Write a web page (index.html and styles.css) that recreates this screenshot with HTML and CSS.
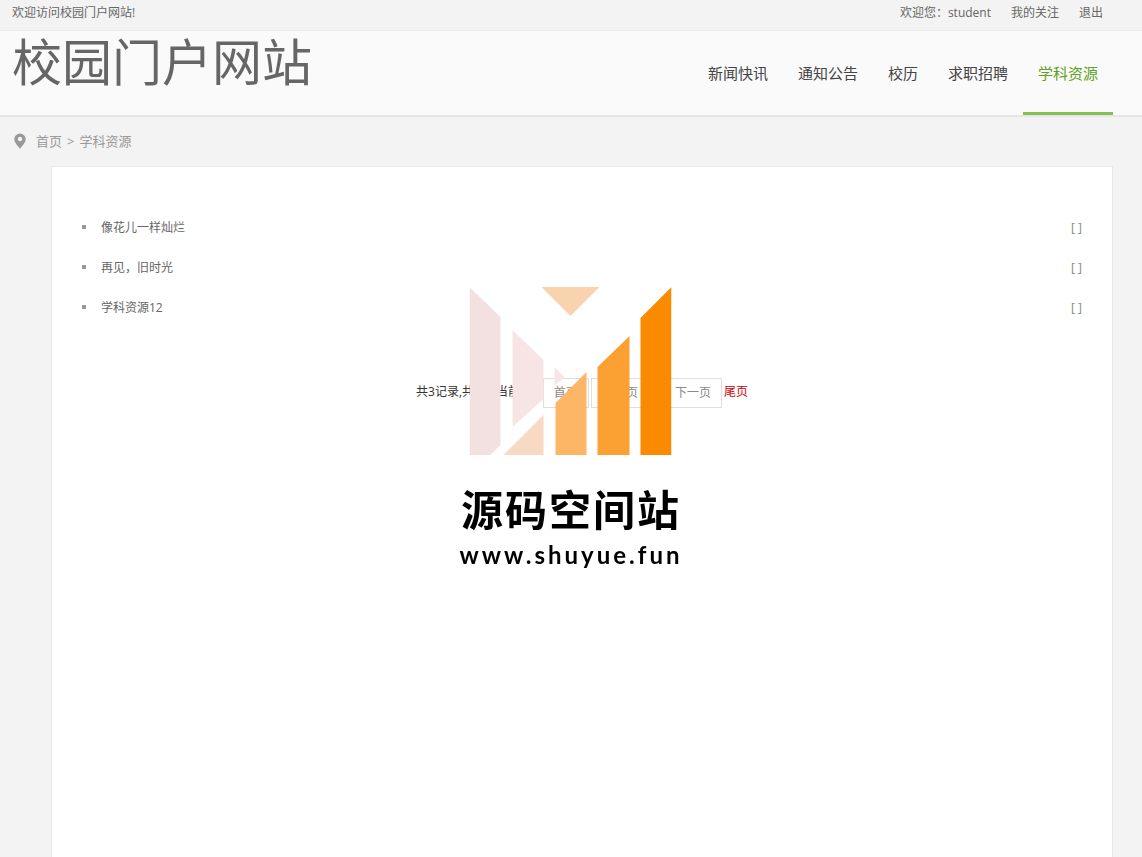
FILE: index.html
```
<!DOCTYPE html>
<html lang="zh-CN">
<head>
  <meta charset="UTF-8">
  <meta name="viewport" content="width=device-width, initial-scale=1.0">
  <title>校园门户网站</title>
  <link rel="stylesheet" href="styles.css">
</head>
<body>
  <div class="topbar">
    <span>欢迎访问校园门户网站!</span>
    <div class="user-links">
      <a href="#">欢迎您：student</a>
      <a href="#">我的关注</a>
      <a href="#">退出</a>
    </div>
  </div>

  <header class="header">
    <a class="logo" href="#">校园门户网站</a>
    <nav class="nav">
      <a href="#">新闻快讯</a>
      <a href="#">通知公告</a>
      <a href="#">校历</a>
      <a href="#">求职招聘</a>
      <a href="#" class="active">学科资源</a>
    </nav>
  </header>

  <div class="crumbs">
    <svg class="pin" viewBox="0 0 12 16" width="12" height="16">
      <path fill="#999" fill-rule="evenodd" d="M6 0.500a5.700 5.700 0 0 1 5.700 5.700C11.700 9.500 8 13 6 15.700C4 13 0.300 9.500 0.300 6.200A5.700 5.700 0 0 1 6 0.500zM6 3.800a2.200 2.200 0 1 0 0 4.400a2.200 2.200 0 0 0 0-4.400z"/>
    </svg>
    <a href="#">首页</a>
    <span>&gt;</span>
    <a href="#">学科资源</a>
  </div>

  <main class="panel">
    <ul class="list">
      <li><a href="#">像花儿一样灿烂</a><span class="date">[ ]</span></li>
      <li><a href="#">再见，旧时光</a><span class="date">[ ]</span></li>
      <li><a href="#">学科资源12</a><span class="date">[ ]</span></li>
    </ul>
    <div class="pager">
      <span class="total">共3记录,共1页,当前1页</span>
      <a class="page" href="#">首页</a>
      <a class="page" href="#">上一页</a>
      <a class="page next" href="#">下一页</a>
      <a class="last" href="#">尾页</a>
    </div>
  </main>

  <div class="watermark">
    <svg viewBox="0 0 202 168" width="202" height="168">
      <path fill="#f3e1e2" d="M0 0L31 30V158L21 168H0z"/>
      <path fill="#f7e5e6" d="M43 43L74 73V112L43 140z"/>
      <path fill="#f7e5e6" d="M85 80L95 90L85 99z"/>
      <path fill="#f8d3ae" d="M72 0H130L101 29z"/>
      <path fill="#f7d9c4" d="M74 128V168H34z"/>
      <path fill="#fdb666" d="M117 85V168H86V116z"/>
      <path fill="#fba133" d="M160 49V168H128V80z"/>
      <path fill="#fa8a00" d="M202 0V168H171V31z"/>
    </svg>
    <div class="mark-name">源码空间站</div>
    <div class="mark-url">www.shuyue.fun</div>
  </div>
</body>
</html>
```
FILE: styles.css
```
* {
  box-sizing: border-box;
}

body {
  margin: 0;
  min-height: 100vh;
  display: flex;
  flex-direction: column;
  background: #f3f3f3;
  color: #666;
  font-family: "Open Sans", "Noto Sans CJK SC", sans-serif;
  font-size: 12px;
  line-height: 26px;
}

a {
  color: inherit;
  text-decoration: none;
}

.topbar {
  display: flex;
  justify-content: space-between;
  height: 31px;
  padding: 0 39px 0 12px;
  border-bottom: 1px solid #ececec;
}

.user-links {
  display: flex;
  gap: 20px;
}

.header {
  display: flex;
  justify-content: space-between;
  height: 86px;
  padding: 0 29px 0 12px;
  background: #fafafa;
  border-bottom: 2px solid #e5e5e5;
}

.logo {
  font-size: 50px;
  font-weight: 400;
  line-height: 62px;
}

.nav {
  display: flex;
}

.nav a {
  padding: 0 15px;
  border-bottom: 3px solid transparent;
  color: #444;
  font-size: 15px;
  line-height: 84px;
}

.nav a.active {
  color: #5fa022;
  border-color: #87c052;
}

.crumbs {
  display: flex;
  align-items: center;
  gap: 5px;
  height: 49px;
  padding: 0 14px 2px;
  color: #999;
  font-size: 13px;
}

.pin {
  margin-right: 5px;
}

.panel {
  flex: 1;
  margin: 0 29px 0 51px;
  padding: 40px 30px;
  background: #fff;
  border: 1px solid #e8e8e8;
  border-bottom: 0;
}

.list {
  margin: 0;
  padding: 0;
  list-style: none;
}

.list li {
  display: flex;
  align-items: center;
  height: 40px;
  line-height: 40px;
}

.list li::before {
  content: "";
  width: 4px;
  height: 4px;
  margin-right: 15px;
  background: #999;
}

.list a,
.date {
  padding-top: 2px;
}

.date {
  margin-left: auto;
  color: #888;
}

.pager {
  display: flex;
  justify-content: center;
  gap: 2px;
  margin-top: 51px;
  line-height: 28px;
}

.total {
  margin-right: 2px;
  color: #333;
}

.page {
  height: 30px;
  padding: 0 10px;
  border: 1px solid #ddd;
  color: #888;
}

.next {
  margin-left: 13px;
}

.last {
  color: #c00;
}

/* logo laid over the middle of the window */
.watermark {
  position: fixed;
  top: 50%;
  left: 50%;
  transform: translate(-50%, -50%);
  display: flex;
  flex-direction: column;
  align-items: center;
  padding-bottom: 2px;
  color: #000;
  font-weight: 700;
  white-space: nowrap;
  pointer-events: none;
}

.mark-name {
  margin-top: 24px;
  font-size: 42px;
  letter-spacing: 2px;
  line-height: 62px;
}

.mark-url {
  font-family: Lato, sans-serif;
  font-size: 24px;
  letter-spacing: 3px;
  line-height: 28px;
}
```
